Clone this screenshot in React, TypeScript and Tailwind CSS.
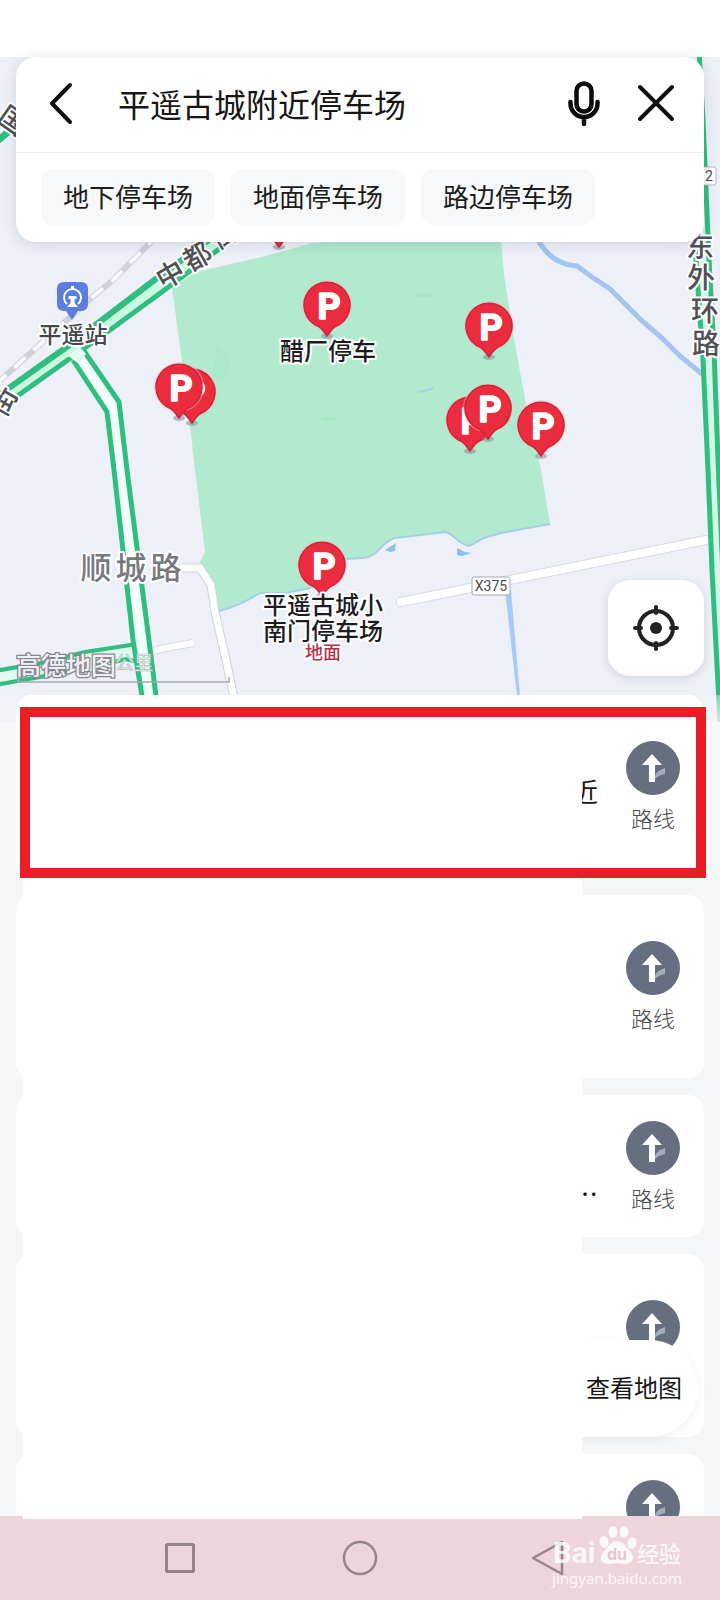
import React, { useState } from "react";

const MAP_FONT = '"Noto Sans CJK SC", "Noto Sans", sans-serif';

type Point = { x: number; y: number };

function ParkingPin({ x, y }: Point) {
  return (
    <g transform={`translate(${x} ${y})`}>
      <ellipse cx="0" cy="31" rx="6" ry="3" fill="#8b8f98" opacity="0.6" />
      <circle r="25" fill="#f4b8be" opacity="0.5" />
      <path
        d="M0 31 C-3 27 -5 24 -8 21.700 A23 23 0 1 1 8 21.700 C5 24 3 27 0 31 Z"
        fill="#ea2c3e"
        stroke="#cf2439"
        strokeWidth="1.500"
      />
      <text
        x="2"
        y="14"
        textAnchor="middle"
        fill="#fff"
        stroke="#fff"
        strokeWidth="1.500"
        strokeLinejoin="round"
        fontFamily="Roboto, sans-serif"
        fontWeight="700"
        fontSize="36"
      >
        P
      </text>
    </g>
  );
}

type Glyph = Point & { char: string; rotate?: number };

function RoadLabel({ glyphs, size, color }: { glyphs: Glyph[]; size: number; color: string }) {
  return (
    <g
      fontFamily={MAP_FONT}
      fontWeight="500"
      fontSize={size}
      fill={color}
      stroke="#fff"
      strokeWidth="4"
      strokeLinejoin="round"
      paintOrder="stroke"
      textAnchor="middle"
    >
      {glyphs.map((g) => (
        <text
          key={`${g.char}${g.x}`}
          transform={`translate(${g.x} ${g.y}) rotate(${g.rotate ?? 0})`}
          y={size * 0.38}
        >
          {g.char}
        </text>
      ))}
    </g>
  );
}

const UPPER_STREET = "M-5 398 L68 346 L157 278 L190 254 L222 230";
const LOWER_STREET = "M-5 412 L72 357 L110 330 L170 286 L215 252 L242 232";
const BRANCH_LEFT = "M73 360 L107 412 L114 470 L133 640 L142 696";
const BRANCH_RIGHT = "M84 351 L119 402 L127 470 L147 625 L156 696";
const RING_LEFT = "M690 150 L696 260 L703 360 L708 470 L712 570 L720 722";
const RING_RIGHT = "M699 50 L703 120 L706 190 L709 260 L714 350 L718 460 L725 620";
const SOUTH_BANK =
  "M550 524 L500 533 L484 538 L469 546 C458 544 453 533 445 532 L395 538 C382 541 378 557 364 558 L345 559 L310 588 L285 593 L260 593 C248 600 236 607 219 611";

function CityMap() {
  return (
    <svg
      className="absolute inset-x-0 top-0 h-[665px] w-full"
      viewBox="0 57 720 665"
      preserveAspectRatio="xMidYMid slice"
      role="img"
      aria-label="平遥古城附近地图"
    >
      <rect x="-400" y="0" width="1600" height="800" fill="#edf0f7" />

      <path
        d="M172 288 L196 272 L262 257 L312 243 L500 228 L504 275 L516 350 L527 410 L541 470 L550 524 L484 538 L469 546 C458 544 453 533 445 532 L395 538 C382 541 378 557 364 558 L345 559 L310 588 L285 593 L260 593 C248 600 236 607 219 611 L210 582 L200 562 L205 552 L195 470 L186 390 Z"
        fill="#b2ead0"
      />
      <path d="M216 345 q14 8 14 20 q0 14 -18 20 Z" fill="#a9e8ca" opacity="0.6" />
      <ellipse cx="329" cy="419" rx="8" ry="2" fill="#a6e8c3" />
      <ellipse cx="424" cy="295" rx="8" ry="2" fill="#a9e2cb" />
      <path d="M418 392 q8 -1 16 -4" stroke="#9dd8dc" strokeWidth="2" fill="none" />

      <path d={SOUTH_BANK} fill="none" stroke="#a4cfe9" strokeWidth="2" />
      <path d="M385 550 L396 543 L395 551 L390 552 Z M457 548 L465 552 L472 553 L462 556 L457 555 Z" fill="#92bfe8" />
      <path
        d="M537 238 C546 255 557 264 577 266 L592 277 L610 289 L640 319 L662 338 L680 356 L702 374"
        fill="none"
        stroke="#a4c5f1"
        strokeWidth="5"
      />
      <path d="M505 590 L511 590 L520 696 L517 696 Z" fill="#a7cbf3" />

      <path d="M-5 385 L25 358 L55 331 L90 299 L112 281 L140 253 L155 238" fill="none" stroke="#cfd1d7" strokeWidth="6" />
      <path
        d="M-5 385 L25 358 L55 331 L90 299 L112 281 L140 253 L155 238"
        fill="none"
        stroke="#f8f9fb"
        strokeWidth="4"
        strokeDasharray="15 11"
      />

      <path d="M401 602 L480 586 L706 540" fill="none" stroke="#d9dbe0" strokeWidth="10" strokeLinecap="round" />
      <path d="M401 602 L480 586 L706 540" fill="none" stroke="#fff" strokeWidth="8" strokeLinecap="round" />
      <path d="M180 568 L200 568 L211 585 L215 612 L226 660 L234 698" fill="none" stroke="#cfd2d8" strokeWidth="9" />
      <path d="M180 568 L200 568 L211 585 L215 612 L226 660 L234 698" fill="none" stroke="#fdfefe" strokeWidth="7" />
      <path d="M140 656 L160 649 L193 643" fill="none" stroke="#d9dbe0" strokeWidth="8" />
      <path d="M140 656 L160 649 L193 643" fill="none" stroke="#fff" strokeWidth="6" />

      <path d="M-5 680 L40 670 L90 659 L138 649" fill="none" stroke="#e2f9ee" strokeWidth="14" />
      <path d="M-5 671 L40 663 L85 652 L137 644" fill="none" stroke="#2fbd80" strokeWidth="4" />
      <path d="M-5 685 L40 677 L70 671" fill="none" stroke="#2fbd80" strokeWidth="4" />
      <path d="M110 663 L126 659 L138 662" fill="none" stroke="#2fbd80" strokeWidth="4" />

      <path d="M78 352 L113 407 L120 470 L140 633 L149 696" fill="none" stroke="#f1fff8" strokeWidth="13" />
      <path d={BRANCH_LEFT} fill="none" stroke="#2fbd80" strokeWidth="5" />
      <path d={BRANCH_RIGHT} fill="none" stroke="#2fbd80" strokeWidth="5" />
      <path d="M-5 405 L70 352 L164 282 L232 231" fill="none" stroke="#c8f8df" strokeWidth="14" />
      <path d={UPPER_STREET} fill="none" stroke="#2fbd80" strokeWidth="6" />
      <path d={LOWER_STREET} fill="none" stroke="#2fbd80" strokeWidth="5" />
      <path d="M68 356 L80 347 L86 354 L78 363 Z" fill="#e3fdf0" />
      <path d="M-5 143 L8 132" stroke="#2fbd80" strokeWidth="7" />

      <path d="M694 150 L702 260 L708 360 L713 470 L722 640" fill="none" stroke="#d3f8e5" strokeWidth="10" />
      <path d={RING_LEFT} fill="none" stroke="#2fbd80" strokeWidth="5" />
      <path d={RING_RIGHT} fill="none" stroke="#2fbd80" strokeWidth="5" />

      <g fontFamily="Roboto, sans-serif" fill="#4b4d50" textAnchor="middle">
        <rect x="698" y="167" width="18" height="18" rx="2" fill="#fff" stroke="#b3b5ba" />
        <text x="709" y="181" fontSize="14">2</text>
        <rect x="472" y="577" width="38" height="18" rx="2" fill="#fff" stroke="#a5a8ad" />
        <text x="491" y="591" fontSize="14">X375</text>
      </g>

      <RoadLabel
        size={28}
        color="#505154"
        glyphs={[
          { char: "国", x: 13, y: 120, rotate: 35 },
          { char: "中", x: 170, y: 274, rotate: -30 },
          { char: "都", x: 197, y: 256, rotate: -30 },
          { char: "街", x: 224, y: 234, rotate: -30 },
        ]}
      />
      <RoadLabel size={29} color="#505154" glyphs={[{ char: "街", x: 2, y: 401, rotate: -60 }]} />
      <RoadLabel
        size={28}
        color="#505154"
        glyphs={[
          { char: "东", x: 700, y: 246 },
          { char: "外", x: 701, y: 277 },
          { char: "环", x: 705, y: 310 },
          { char: "路", x: 706, y: 343 },
        ]}
      />
      <RoadLabel
        size={31}
        color="#77797d"
        glyphs={[
          { char: "顺", x: 96, y: 567 },
          { char: "城", x: 131, y: 567 },
          { char: "路", x: 166, y: 567 },
        ]}
      />

      <path
        d="M64 282 H81 Q88 282 88 289 V304 Q88 311 81 311 H78 L72 320 L66 311 H64 Q57 311 57 304 V289 Q57 282 64 282 Z"
        fill="#5b7ce0"
      />
      <path d="M67 304 A8.500 8.500 0 1 1 78 304" fill="none" stroke="#fff" strokeWidth="2" />
      <path d="M72.500 286 V290" stroke="#fff" strokeWidth="3" />
      <path d="M68.500 296 H76.500 V299 H74.500 V303 L78 307 H67 L70.500 303 V299 H68.500 Z" fill="#fff" />

      <ParkingPin x={279} y={216} />
      <ParkingPin x={327} y={305} />
      <ParkingPin x={489} y={326} />
      <ParkingPin x={470} y={420} />
      <ParkingPin x={488} y={408} />
      <ParkingPin x={541} y={425} />
      <ParkingPin x={192} y={392} />
      <ParkingPin x={179} y={387} />
      <ParkingPin x={322} y={565} />

      <g
        fontFamily={MAP_FONT}
        fontWeight="500"
        fontSize="24"
        fill="#1c1c1e"
        stroke="#fff"
        strokeWidth="4"
        strokeLinejoin="round"
        paintOrder="stroke"
        textAnchor="middle"
      >
        <text x="73" y="343" fontSize="23" fill="#45474b">平遥站</text>
        <text x="328" y="360">醋厂停车</text>
        <text x="323" y="614">平遥古城小</text>
        <text x="323" y="640">南门停车场</text>
        <text x="323" y="659" fontSize="18" fill="#b7304a">地面</text>
      </g>

      <g fontFamily={MAP_FONT}>
        <text x="115" y="670" fontSize="19" fill="#e6f3ee" stroke="#b0b6b9" strokeWidth="0.600">
          公里
        </text>
        <text
          x="16"
          y="675"
          fontSize="25"
          fontWeight="500"
          fill="#eef0f5"
          stroke="#85878d"
          strokeWidth="2.500"
          paintOrder="stroke"
        >
          高德地图
        </text>
      </g>
      <path d="M18 676 V682 H229 V677" fill="none" stroke="#a6a9af" strokeWidth="1.500" />
    </svg>
  );
}

function SearchCard() {
  const [query, setQuery] = useState("平遥古城附近停车场");
  return (
    <form
      className="relative mx-4 rounded-[20px] bg-white shadow-[0_2px_14px_rgba(60,70,90,0.18)]"
      onSubmit={(e) => e.preventDefault()}
    >
      <div className="flex h-24 items-center border-b border-[#ebebeb] px-6 pb-1">
        <button type="button" aria-label="返回" className="flex h-12 w-12 items-center justify-center">
          <svg viewBox="0 0 48 48" className="h-12 w-12" fill="none" stroke="#111" strokeWidth="4" strokeLinecap="round" strokeLinejoin="round">
            <path d="M30 6 L12 24.500 L30 43" />
          </svg>
        </button>
        <input
          aria-label="搜索地点"
          value={query}
          onChange={(e) => setQuery(e.target.value)}
          className="ml-[30px] h-11 min-w-0 flex-1 self-start bg-transparent pt-6 box-content text-[32px] leading-[44px] text-[#161616] outline-none"
        />
        <button type="button" aria-label="语音搜索" className="mr-6 flex h-12 w-12 items-center justify-center">
          <svg viewBox="0 0 48 48" className="h-12 w-12" fill="none" stroke="#0a0a0a" strokeWidth="4.500">
            <rect x="16.500" y="4.500" width="15" height="28" rx="7.500" />
            <path d="M10.500 23 V24.500 A13.500 13.500 0 0 0 37.500 24.500 V23 M24 38 V45" strokeLinecap="round" />
          </svg>
        </button>
        <button type="button" aria-label="清除" className="flex h-12 w-12 items-center justify-center">
          <svg viewBox="0 0 48 48" className="h-12 w-12" stroke="#111" strokeWidth="4" strokeLinecap="round">
            <path d="M8 8 L40 40 M40 8 L8 40" />
          </svg>
        </button>
      </div>
      <div className="flex gap-4 px-[25px] pt-4 pb-[17px]">
        {["地下停车场", "地面停车场", "路边停车场"].map((label) => (
          <button
            key={label}
            type="button"
            className="h-14 rounded-xl bg-[#f7f8f9] px-[22px] pb-0.5 text-[26px] leading-8 whitespace-nowrap text-[#1c1c1c]"
          >
            {label}
          </button>
        ))}
      </div>
    </form>
  );
}

function RouteButton() {
  return (
    <button type="button" aria-label="路线" className="flex w-[54px] shrink-0 flex-col items-center">
      <svg viewBox="0 0 54 54" className="h-[54px] w-[54px] shrink-0">
        <circle cx="27" cy="27" r="27" fill="#666f80" />
        <path d="M29 35 C31 30 34 29 39 27 V33 C35 34 32 35 29 38 Z" fill="#a5adba" />
        <path d="M26 13 L36 24 H29 V41 H23 V24 H16 Z" fill="#fff" />
      </svg>
      <span className="mt-1.5 text-[22px] leading-8 font-light text-[#4a4a4a]">路线</span>
    </button>
  );
}

type Result = { id: number; size: string; tail?: string; tailSpace?: string };

const RESULTS: Result[] = [
  { id: 1, size: "h-[183px] pt-[46px]", tail: "近", tailSpace: "mt-[34px]" },
  { id: 2, size: "h-[183px] pt-[46px]" },
  { id: 3, size: "h-[142px] pt-[26px]", tail: "…", tailSpace: "mt-14" },
  { id: 4, size: "h-[183px] pt-[46px]" },
  { id: 5, size: "h-[62px] pt-[26px]" },
];

function ResultList() {
  return (
    <main className="relative bg-linear-to-b from-[#f4f6f8]/40 to-[#f4f6f8] to-[40px]">
      <ul className="flex flex-col gap-[17px] px-4">
        {RESULTS.map((r) => (
          <li
            key={r.id}
            className={`flex items-start justify-end gap-7 overflow-hidden rounded-t-2xl bg-white pr-6 ${
              r.id < 5 ? "rounded-b-2xl" : ""
            } ${r.size}`}
          >
            {r.tail && <span className={`text-[26px] leading-8 text-[#161616] ${r.tailSpace}`}>{r.tail}</span>}
            <RouteButton />
          </li>
        ))}
      </ul>
      <button
        type="button"
        className="absolute right-[22px] bottom-[79px] h-[97px] rounded-full bg-white pr-4 pb-1 pl-12 text-2xl text-[#161616] shadow-[0_3px_8px_rgba(80,90,80,0.08)]"
      >
        查看地图
      </button>
      <div className="absolute top-[25px] right-[138px] -bottom-[3px] left-[23px] z-10 bg-white" />
      <div className="absolute top-3 right-[14px] left-5 z-10 h-[171px] border-10 border-[#ec1d24]" />
    </main>
  );
}

function Watermark() {
  return (
    <div className="absolute right-[38px] bottom-3 flex flex-col text-white/80">
      <svg viewBox="0 0 132 46" className="h-[46px] w-[132px]">
        <g fill="#fff" fillOpacity="0.82">
          <text x="3" y="41" fontFamily="Inter, sans-serif" fontWeight="700" fontSize="28">Bai</text>
          <ellipse cx="54" cy="20" rx="4.500" ry="6" transform="rotate(-15 54 20)" />
          <ellipse cx="63" cy="10" rx="4.500" ry="6" />
          <ellipse cx="74" cy="10" rx="4.500" ry="6" />
          <ellipse cx="82" cy="21" rx="4.500" ry="6" transform="rotate(15 82 21)" />
          <path d="M67 19 C74 19 76 26 80 29 C86 35 82 43 74 42 C69 41 65 41 60 42 C51 43 48 35 54 29 C59 25 60 19 67 19 Z" />
          <text x="87" y="40" fontFamily={MAP_FONT} fontWeight="500" fontSize="22">经验</text>
        </g>
        <text x="67" y="38" textAnchor="middle" fill="#e6c7cd" fontFamily="Inter, sans-serif" fontWeight="700" fontSize="16">
          du
        </text>
      </svg>
      <span className="self-end font-['Noto_Sans'] text-[15px] leading-5">jingyan.baidu.com</span>
    </div>
  );
}

function SystemBar() {
  const button = "flex items-center justify-center";
  const icon = "h-12 w-12";
  return (
    <nav aria-label="系统导航" className="relative grid h-[84px] grid-cols-3 bg-[#eed5d9] px-[12.5%]">
      <button type="button" aria-label="最近任务" className={button}>
        <svg viewBox="0 0 48 48" className={icon} fill="none" stroke="#968487" strokeWidth="3">
          <rect x="10.500" y="10.500" width="27" height="27" rx="1" />
        </svg>
      </button>
      <button type="button" aria-label="主屏幕" className={button}>
        <svg viewBox="0 0 48 48" className={icon} fill="none" stroke="#968487" strokeWidth="2.500">
          <circle cx="24" cy="24" r="16" />
        </svg>
      </button>
      <button type="button" aria-label="返回" className={button}>
        <svg viewBox="0 0 48 48" className={icon} fill="none" stroke="#968487" strokeWidth="2.500" strokeLinejoin="round">
          <path d="M17 24 L46 8 V40 Z" />
        </svg>
      </button>
      <Watermark />
    </nav>
  );
}

export default function App() {
  return (
    <div
      lang="zh-CN"
      className="min-h-screen bg-white font-['Noto_Sans_CJK_SC','Noto_Sans',sans-serif]"
    >
      <header className="h-[57px] bg-white" />
      <div className="relative">
        <CityMap />
        <section className="relative flex h-[638px] flex-col justify-between pb-[19px]">
          <SearchCard />
          <button
            type="button"
            aria-label="定位"
            className="mr-4 flex h-24 w-24 items-center justify-center self-end rounded-[22px] bg-white shadow-[0_2px_10px_rgba(60,70,90,0.15)]"
          >
            <svg viewBox="0 0 48 48" className="h-12 w-12" fill="none" stroke="#222" strokeWidth="4">
              <circle cx="24" cy="24" r="17" />
              <circle cx="24" cy="24" r="6" fill="#222" stroke="none" />
              <path d="M24 3 V9 M24 39 V45 M3 24 H9 M39 24 H45" strokeLinecap="round" />
            </svg>
          </button>
        </section>
        <ResultList />
      </div>
      <SystemBar />
    </div>
  );
}
